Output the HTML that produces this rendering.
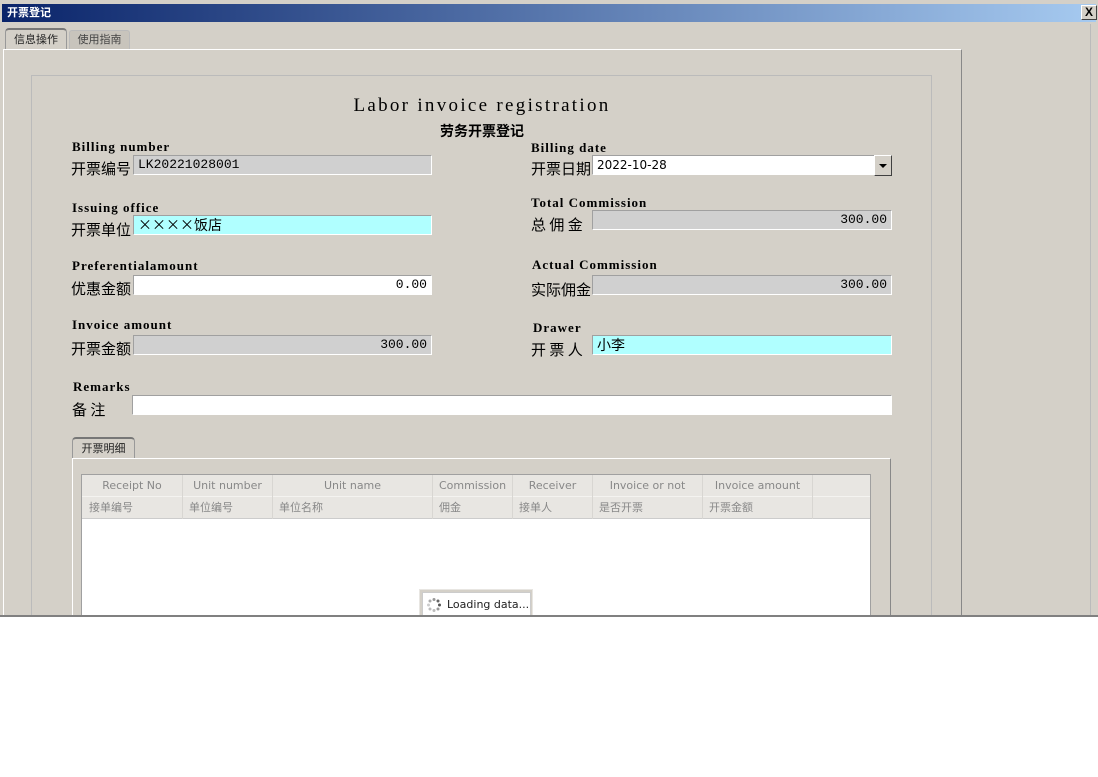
<!DOCTYPE html><html><head><meta charset="utf-8"><style>
*{margin:0;padding:0;box-sizing:border-box}
body{width:1098px;height:777px;background:#fff;position:relative;overflow:hidden;font-family:"Liberation Sans","Noto Sans CJK SC",sans-serif}
.a{position:absolute}
.clip{left:0;top:0;width:1098px;height:615px;overflow:hidden;background:#d4d0c8}
.tb{left:2px;top:4px;width:1094px;height:18px;background:linear-gradient(90deg,#0a246a,#a6caf0);color:#fff;font:bold 11px "Liberation Sans","Noto Sans CJK SC",sans-serif;line-height:18px;padding-left:5px}
.x{left:1081px;top:5px;width:16px;height:15px;background:#d4d0c8;border:1px solid;border-color:#fff #404040 #404040 #fff;font:bold 12px "Liberation Sans";text-align:center;line-height:13px;color:#000}
.lbl{font:bold 13px "Liberation Serif","Noto Serif CJK SC",serif;letter-spacing:1px;color:#000;white-space:nowrap}
.cn{font:15px "Noto Sans CJK SC",sans-serif;color:#000;white-space:nowrap}
.in{height:20px;border:1px solid;border-color:#a0a0a0 #fff #fff #a0a0a0;background:#d0d0d0;font:13px "Liberation Mono","Noto Sans CJK SC",monospace;line-height:18px;padding:0 4px;color:#000;white-space:nowrap}
.r{text-align:right}
.th{font:11px "DejaVu Sans","Noto Sans CJK SC",sans-serif;color:#888;white-space:nowrap}
</style></head><body>
<div class="a clip">
<div class="a tb">开票登记</div>
<div class="a x">X</div>
<div class="a" style="left:5px;top:28px;width:62px;height:22px;background:#d4d0c8;border:1px solid #999;border-top:2px solid #777;border-bottom:none;border-radius:4px 4px 0 0;font-size:11px;line-height:20px;text-align:center;color:#222">信息操作</div>
<div class="a" style="left:69px;top:30px;width:61px;height:19px;background:#c8c4bc;border:1px solid #bbb;border-bottom:none;border-radius:3px 3px 0 0;font-size:11px;line-height:18px;text-align:center;color:#444">使用指南</div>
<div class="a" style="left:3px;top:49px;width:959px;height:580px;border-top:1px solid #fff;border-right:1px solid #888;border-left:1px solid #fff"></div>
<div class="a" style="left:1090px;top:24px;width:1px;height:592px;background:#bbb"></div>
<div class="a" style="left:31px;top:75px;width:901px;height:600px;border:1px solid #bbb"></div>
<div class="a" style="left:300px;top:95px;width:364px;text-align:center;font:19px 'Liberation Serif',serif;letter-spacing:2.3px;white-space:nowrap">Labor invoice registration</div>
<div class="a" style="left:330px;top:121px;width:304px;text-align:center;font:bold 14px 'Noto Sans CJK SC',sans-serif">劳务开票登记</div>

<div class="a lbl" style="left:72px;top:139px">Billing number</div>
<div class="a cn" style="left:71px;top:158px">开票编号</div>
<div class="a in" style="left:133px;top:155px;width:299px">LK20221028001</div>

<div class="a lbl" style="left:531px;top:140px">Billing date</div>
<div class="a cn" style="left:531px;top:158px">开票日期</div>
<div class="a in" style="left:592px;top:155px;width:283px;background:#fff;font-family:'DejaVu Sans';font-size:12px">2022-10-28</div>
<div class="a" style="left:874px;top:155px;width:18px;height:21px;border:1px solid;border-color:#fff #404040 #404040 #fff;background:#d4d0c8"><div class="a" style="left:4px;top:8px;border:4px solid transparent;border-top:4px solid #000;border-bottom:0"></div></div>

<div class="a lbl" style="left:72px;top:200px">Issuing office</div>
<div class="a cn" style="left:71px;top:219px">开票单位</div>
<div class="a in" style="left:133px;top:215px;width:299px;background:#b0ffff;font-family:'Noto Sans CJK SC';font-size:14px">××××饭店</div>

<div class="a lbl" style="left:531px;top:195px">Total Commission</div>
<div class="a cn" style="left:531px;top:214px">总 佣 金</div>
<div class="a in r" style="left:592px;top:210px;width:300px">300.00</div>

<div class="a lbl" style="left:72px;top:258px">Preferentialamount</div>
<div class="a cn" style="left:71px;top:278px">优惠金额</div>
<div class="a in r" style="left:133px;top:275px;width:299px;background:#fff">0.00</div>

<div class="a lbl" style="left:532px;top:257px">Actual Commission</div>
<div class="a cn" style="left:531px;top:279px">实际佣金</div>
<div class="a in r" style="left:592px;top:275px;width:300px">300.00</div>

<div class="a lbl" style="left:72px;top:317px">Invoice amount</div>
<div class="a cn" style="left:71px;top:338px">开票金额</div>
<div class="a in r" style="left:133px;top:335px;width:299px">300.00</div>

<div class="a lbl" style="left:533px;top:320px">Drawer</div>
<div class="a cn" style="left:531px;top:339px">开 票 人</div>
<div class="a in" style="left:592px;top:335px;width:300px;background:#b0ffff;font-family:'Noto Sans CJK SC';font-size:14px">小李</div>

<div class="a lbl" style="left:73px;top:379px">Remarks</div>
<div class="a cn" style="left:72px;top:399px">备 注</div>
<div class="a in" style="left:132px;top:395px;width:760px;background:#fff"></div>

<div class="a" style="left:72px;top:437px;width:63px;height:22px;border:1px solid #999;border-top:2px solid #777;border-bottom:none;border-radius:4px 4px 0 0;font-size:11px;line-height:20px;text-align:center;color:#222">开票明细</div>
<div class="a" style="left:72px;top:458px;width:819px;height:200px;border-top:1px solid #fff;border-left:1px solid #fff;border-right:1px solid #888"></div>
<div class="a" style="left:81px;top:474px;width:790px;height:200px;background:#fff;border:1px solid #a0a0a0"></div>
<div class="a" style="left:82px;top:475px;width:788px;height:44px;background:#e8e6e2;border-bottom:1px solid #ccc"></div>
<div class="a" style="left:82px;top:496px;width:788px;height:1px;background:#f4f3f0"></div>
<div class="a th" style="left:82px;top:475px;width:101px;height:44px;border-right:1px solid #d8d6d2"><div style="text-align:center;line-height:22px">Receipt No</div><div style="padding-left:7px;line-height:21px">接单编号</div></div>
<div class="a th" style="left:183px;top:475px;width:90px;height:44px;border-right:1px solid #d8d6d2"><div style="text-align:center;line-height:22px">Unit number</div><div style="padding-left:6px;line-height:21px">单位编号</div></div>
<div class="a th" style="left:273px;top:475px;width:160px;height:44px;border-right:1px solid #d8d6d2"><div style="text-align:center;line-height:22px">Unit name</div><div style="padding-left:6px;line-height:21px">单位名称</div></div>
<div class="a th" style="left:433px;top:475px;width:80px;height:44px;border-right:1px solid #d8d6d2"><div style="text-align:center;line-height:22px">Commission</div><div style="padding-left:6px;line-height:21px">佣金</div></div>
<div class="a th" style="left:513px;top:475px;width:80px;height:44px;border-right:1px solid #d8d6d2"><div style="text-align:center;line-height:22px">Receiver</div><div style="padding-left:6px;line-height:21px">接单人</div></div>
<div class="a th" style="left:593px;top:475px;width:110px;height:44px;border-right:1px solid #d8d6d2"><div style="text-align:center;line-height:22px">Invoice or not</div><div style="padding-left:6px;line-height:21px">是否开票</div></div>
<div class="a th" style="left:703px;top:475px;width:110px;height:44px;border-right:1px solid #d8d6d2"><div style="text-align:center;line-height:22px">Invoice amount</div><div style="padding-left:6px;line-height:21px">开票金额</div></div>
<div class="a" style="left:419px;top:589px;width:114px;height:30px;background:#d4d0c8;border:1px solid #e8e6e2"></div>
<div class="a" style="left:422px;top:592px;width:109px;height:26px;background:#fff;border:1px solid #ccc;font:11px 'DejaVu Sans',sans-serif;line-height:24px;padding-left:24px;color:#222;white-space:nowrap">Loading data...</div>
<svg class="a" style="left:426px;top:597px" width="16" height="16"><g fill="#999"><circle cx="8" cy="2.5" r="1.5"/><circle cx="12" cy="4" r="1.5" fill="#666"/><circle cx="13.5" cy="8" r="1.5" fill="#555"/><circle cx="12" cy="12" r="1.5"/><circle cx="8" cy="13.5" r="1.5" fill="#bbb"/><circle cx="4" cy="12" r="1.5" fill="#bbb"/><circle cx="2.5" cy="8" r="1.5" fill="#ccc"/><circle cx="4" cy="4" r="1.5" fill="#aaa"/></g></svg>
</div>
<div class="a" style="left:0;top:615px;width:1098px;height:2px;background:#808080"></div>
</body></html>
